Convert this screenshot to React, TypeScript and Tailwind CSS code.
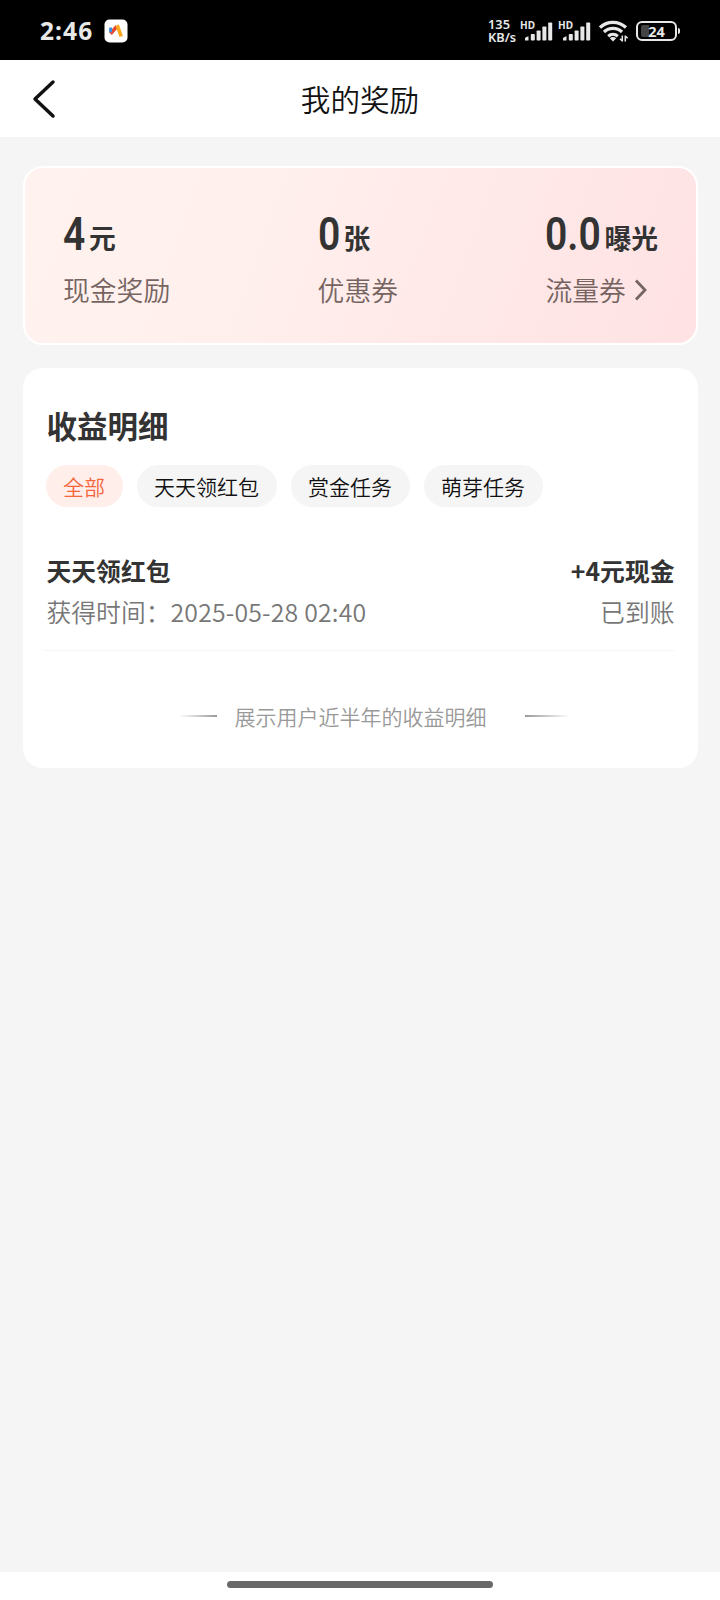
import React from 'react';

interface Stat {
  value: string;
  unit: string;
  label: string;
  width: string;
  arrow?: boolean;
}

const stats: Stat[] = [
  { value: '4', unit: '元', label: '现金奖励', width: 'w-[26px]' },
  { value: '0', unit: '张', label: '优惠券', width: 'w-[26px]' },
  { value: '0.0', unit: '曝光', label: '流量券', width: 'w-[59px]', arrow: true },
];

const tabs = ['全部', '天天领红包', '赏金任务', '萌芽任务'];

function Signal() {
  return (
    <div className="relative h-[20px] w-[32px]">
      <span className="absolute left-[-5px] top-[-1px] font-['Noto_Sans'] text-[10px] font-bold leading-[10px]">HD</span>
      <svg className="absolute inset-0" width="32" height="20" viewBox="1 0 32 20" fill="#e8e8e8">
        <path d="M0 19.5q0-3 4.5-4.2v4.2z" />
        <rect x="6.8" y="13" width="4" height="6.5" rx="0.8" />
        <rect x="12.6" y="9.5" width="4" height="10" rx="0.8" />
        <rect x="18.4" y="5.5" width="4" height="14" rx="0.8" />
        <rect x="24.2" y="1.5" width="4" height="18" rx="0.8" />
      </svg>
    </div>
  );
}

function StatusBar() {
  return (
    <div className="flex h-[60px] items-center bg-black pl-[40px] pr-[40px] pt-[2px] text-[#e8e8e8]">
      <span className="w-[64px] font-['Noto_Sans'] text-[24.5px] font-bold leading-[30px] tracking-[1.1px]">2:46</span>
      <svg width="24" height="24" viewBox="0 0 24 24">
        <rect x="0.5" y="0.5" width="23" height="23" rx="5" fill="#fff" />
        <path d="M12.8 7.5L6.5 14.8" stroke="#e5482f" strokeWidth="3.6" />
        <path d="M6.6 8.5v4.8" stroke="#3d8fe0" strokeWidth="3" />
        <path d="M13.2 6.2l4 11.3" stroke="#fba81c" strokeWidth="3.6" />
      </svg>
      <div className="ml-auto flex items-center">
        <div className="mr-[8px] w-[29px] font-['Noto_Sans'] text-[12.8px] font-semibold">
          <div className="h-[13px] leading-[13px]">135</div>
          <div className="h-[13px] leading-[13px]">KB/s</div>
        </div>
        <Signal />
        <div className="w-[6px]" />
        <Signal />
        <svg className="ml-[4px]" width="30" height="22" viewBox="0 0 30 22" fill="none" stroke="#e8e8e8" strokeWidth="3.2">
          <path d="M1 7.5a19 19 0 0 1 26 0" />
          <path d="M5 12a13 13 0 0 1 18 0" />
          <path d="M9.2 16.2a7.5 7.5 0 0 1 9.6 0" />
          <path d="M10.8 18.2q3.2-2.2 6.4 0L14 21.4z" fill="#e8e8e8" stroke="none" />
          <path d="M23.3 15.5v6M23.3 21l-2.3-2.3M26.3 21.5v-6M26.3 16l2.3 2.3" strokeWidth="1.5" />
        </svg>
        <div className="relative ml-[7px] flex h-[20px] w-[41px] items-center justify-center rounded-[6px] border-2 border-[#e8e8e8]">
          <div className="absolute left-[3px] top-[2px] h-[12px] w-[8px] rounded-l-[2px] bg-[#444]" />
          <span className="relative font-['Noto_Sans'] text-[14.5px] font-bold leading-[16px]">24</span>
        </div>
        <div className="ml-[1px] h-[6px] w-[2px] rounded-r-sm bg-[#e8e8e8]" />
      </div>
    </div>
  );
}

function StatItem({ value, unit, label, width, arrow }: Stat) {
  return (
    <div>
      <div className="flex h-[50px] items-baseline">
        <span className={`${width} shrink-0 whitespace-nowrap font-[Roboto] text-[46px] font-semibold leading-[50px]`}>
          <span className="inline-block origin-left scale-x-[0.85]">{value}</span>
        </span>
        <span className="relative top-[-1px] text-[26.8px] font-bold leading-[40px]">{unit}</span>
      </div>
      <div className="mt-[11px] flex items-center text-[26.8px] font-[350] leading-[40px] text-[#766461]">
        {label}
        {arrow && (
          <svg className="ml-[8px]" width="14" height="22" viewBox="0 0 14 22" fill="none" stroke="#766461" strokeWidth="2.8">
            <path d="M2 1.5l9 9.5L2 20.5" />
          </svg>
        )}
      </div>
    </div>
  );
}

export default function App() {
  return (
    <div className="flex h-[1600px] w-[720px] flex-col bg-[#f5f5f5] font-['Noto_Sans_CJK_SC',sans-serif] text-[#333]">
      <StatusBar />

      {/* Header */}
      <header className="grid h-[77px] grid-cols-[1fr_auto_1fr] items-center bg-white">
        <svg className="ml-[32px]" width="24" height="40" viewBox="0 0 24 40" fill="none" stroke="#111" strokeWidth="3.5" strokeLinecap="round" strokeLinejoin="round">
          <path d="M21 3L3 20l18 17" />
        </svg>
        <h1 className="mt-[1px] text-[29.6px] font-[350] leading-[44px] text-[#111]">我的奖励</h1>
      </header>

      <main className="flex-1 pl-[23px] pr-[22px] pt-[29px]">
        {/* Reward totals */}
        <section className="flex h-[179px] justify-between rounded-[20px] border-2 border-white bg-[linear-gradient(110deg,#fff2ef_0%,#fff0ed_32%,#ffebea_55%,#ffe6e6_80%,#ffe2e4_100%)] pl-[38px] pr-[38px] pt-[41px]">
          {stats.map((stat) => (
            <StatItem key={stat.label} {...stat} />
          ))}
        </section>

        {/* Income details */}
        <section className="mt-[23px] h-[400px] rounded-[20px] bg-white px-[23.5px] pt-[35px]">
          <h2 className="text-[30.5px] font-bold leading-[44px]">收益明细</h2>
          <div className="ml-[-1px] mt-[18px] flex gap-[14px]">
            {tabs.map((tab, i) => (
              <button
                key={tab}
                className={`h-[42px] rounded-full px-[17.5px] text-[21px] font-[350] leading-[42px] ${i === 0 ? 'bg-[#ffeeea] text-[#f5663c]' : 'bg-[#f5f5f5] text-[#111]'}`}
              >
                {tab}
              </button>
            ))}
          </div>

          <div className="mt-[42px] flex justify-between text-[24.8px] font-bold leading-[42px]">
            <span>天天领红包</span>
            <span>+4元现金</span>
          </div>
          <div className="mt-[-1px] flex justify-between text-[24.8px] font-[350] leading-[42px] text-[#777]">
            <span>获得时间：<span className="tracking-[0.2px]">2025-05-28 02:40</span></span>
            <span>已到账</span>
          </div>
          <div className="ml-[-4px] mt-[18px] h-px bg-[#f7f7f7]" />

          <div className="mt-[49px] flex items-center pl-[132px] text-[21px] font-[350] leading-[32px] text-[#999]">
            <div className="mr-[18px] h-[2px] w-[38px] bg-linear-to-r from-transparent to-[#999]" />
            <span>展示用户近半年的收益明细</span>
            <div className="ml-[38px] h-[2px] w-[45px] bg-linear-to-r from-[#999] to-transparent" />
          </div>
        </section>
      </main>

      <footer className="flex h-[28px] justify-center bg-white pt-[9px]">
        <div className="h-[7px] w-[266px] rounded-full bg-[#696969]" />
      </footer>
    </div>
  );
}
